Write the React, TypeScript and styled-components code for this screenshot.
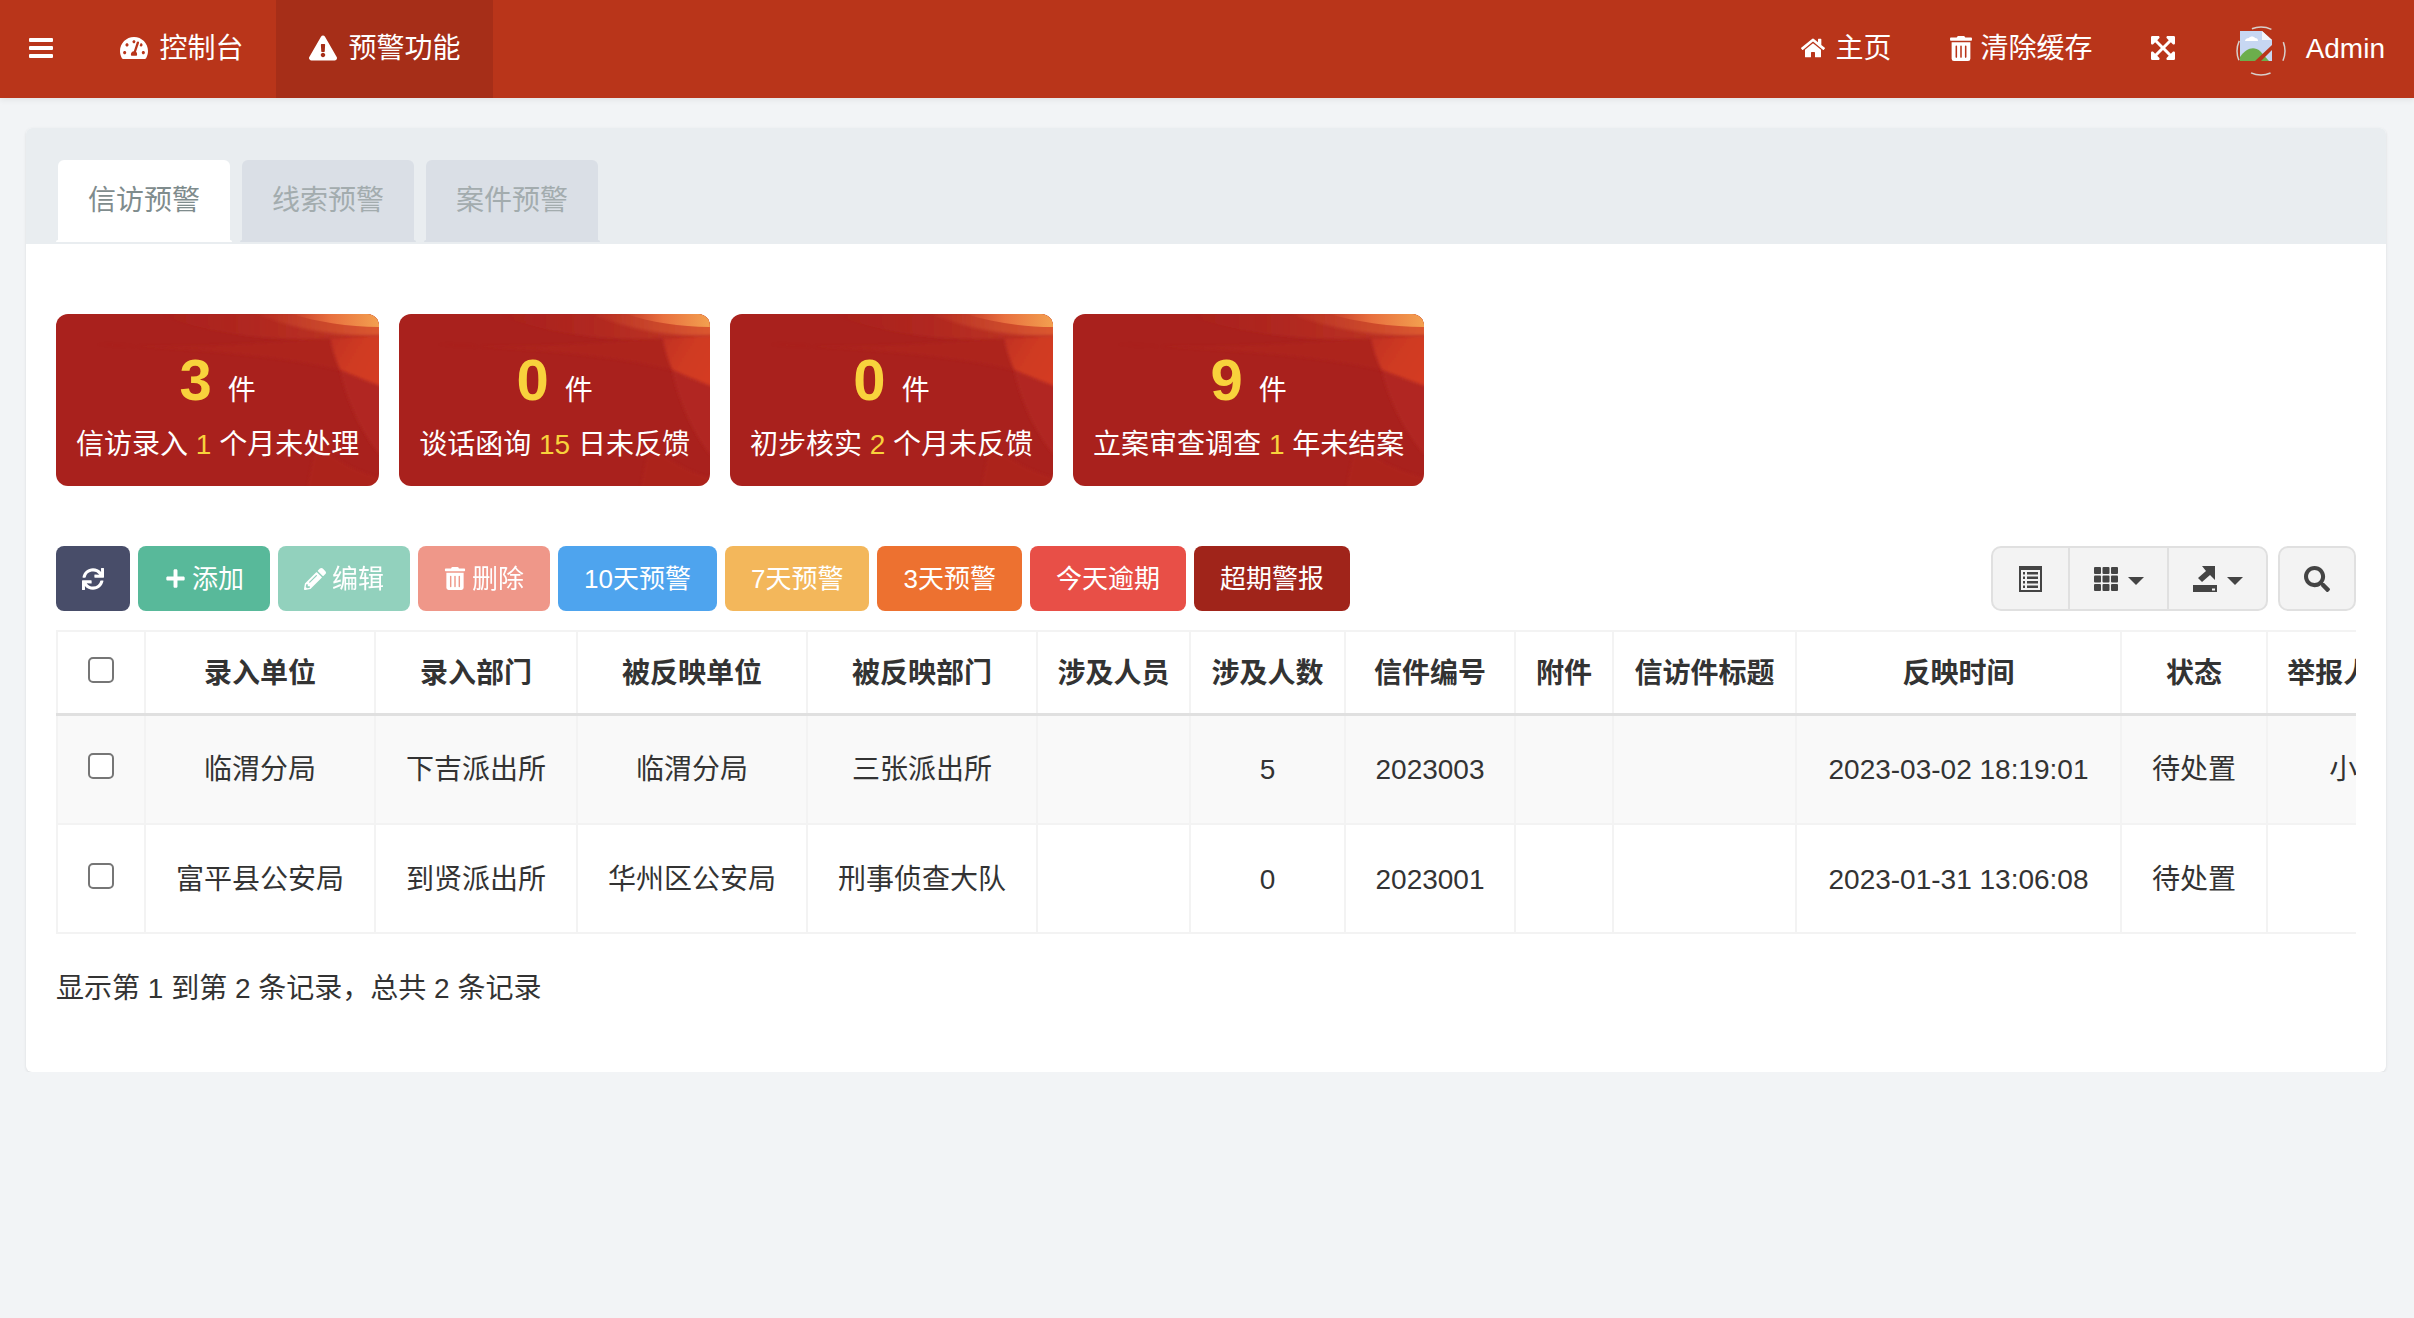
import React from 'react';
import styled, { createGlobalStyle } from 'styled-components';
import { FaTachometerAlt, FaExclamationTriangle, FaHome, FaTrashAlt, FaExpandArrowsAlt, FaSync, FaPlus, FaPencilAlt, FaSearch } from 'react-icons/fa';

const Global = createGlobalStyle`
  html, body { margin: 0; padding: 0; background: #f2f4f6; }
  body { font-family: "Liberation Sans", "Noto Sans CJK SC", sans-serif; font-size: 28px; color: #333; }
  * { box-sizing: border-box; }
`;

const Navbar = styled.header`
  height: 98px; background: #b9351a; color: #fff; display: flex; justify-content: space-between;
  box-shadow: 0 2px 6px rgba(0,0,0,.07);
`;
const NavGroup = styled.nav`display: flex; align-items: stretch;`;
const Toggle = styled.div`
  width: 87px; padding-left: 29px; display: flex; align-items: center;
  svg { display: block; margin-top: -2px; }
`;
const NavItem = styled.div<{ $active?: boolean; $pad?: number; $gap?: number }>`
  display: flex; align-items: center; padding: 0 ${p => p.$pad ?? 32.5}px; gap: ${p => p.$gap ?? 11}px;
  background: ${p => (p.$active ? '#a62e18' : 'transparent')};
  line-height: 40px; white-space: nowrap;
  svg { display: block; margin-top: -2px; }
`;
const AvatarWrap = styled.div`
  display: flex; align-items: center; gap: 20px; padding: 0 29px 0 32px;
  svg { display: block; margin-top: 4px; }
`;

const Panel = styled.main`
  margin: 30px 28px 0 26px; height: 944px; background: #fff; border-radius: 6px;
  box-shadow: 0 1px 3px rgba(0,0,0,.1);
`;
const PanelHead = styled.div`
  height: 116px; padding: 32px 32px 2px; background: #e9edf0; border-radius: 6px 6px 0 0;
  display: flex; gap: 12px;
`;
const Tab = styled.div<{ $active?: boolean }>`
  position: relative; width: 172px; height: 82px; border-radius: 6px 6px 0 0; text-align: center; line-height: 82px;
  background: ${p => (p.$active ? '#fff' : '#dadfe6')};
  color: ${p => (p.$active ? '#7f8c8d' : '#a3acae')};
  &::after {
    content: ''; position: absolute; left: -2px; right: -2px; bottom: 0; height: 2px;
    background: ${p => (p.$active ? '#fff' : '#dadfe6')}; border-radius: 2px 2px 0 0;
  }
`;
const PanelBody = styled.div`padding: 70px 30px 0;`;

const Cards = styled.section`display: flex; gap: 20px;`;
const Card = styled.div`
  position: relative; overflow: hidden; height: 172px; padding: 34px 20px 0; border-radius: 12px; background: #a9211d;
  color: #fff; text-align: center; white-space: nowrap;
`;
const CardBg = styled.svg`position: absolute; inset: 0; width: 100%; height: 100%; display: block;`;
const CountRow = styled.div`position: relative; line-height: 64px; height: 64px;`;
const Count = styled.b`font-size: 58px; color: #f8d23c; font-weight: 700; margin-right: 16px;`;
const Desc = styled.div`position: relative; margin-top: 13px; line-height: 40px;`;
const Hi = styled.span`color: #f8d23c;`;

const Toolbar = styled.div`display: flex; align-items: center; margin-top: 60px; height: 65px;`;
const Buttons = styled.div`display: flex; gap: 8px;`;
const Btn = styled.button<{ $bg: string; $dim?: boolean }>`
  height: 65px; padding: 0 26px; border: 0; border-radius: 8px; color: #fff;
  font-family: inherit; font-size: 26px;
  background: ${p => p.$bg}; opacity: ${p => (p.$dim ? 0.65 : 1)};
  display: flex; align-items: center; gap: 6px; white-space: nowrap; line-height: 40px;
`;
const IconBox = styled.span<{ $w?: number }>`
  width: ${p => p.$w ?? 22}px; display: flex; justify-content: center; align-items: center;
  svg { display: block; }
`;
const ToolRight = styled.div`margin-left: auto; display: flex; gap: 10px;`;
const BtnGroup = styled.div`
  display: flex; height: 65px; border: 2px solid #e0e0e0; border-radius: 10px; background: #f3f3f3; overflow: hidden;
`;
const GroupBtn = styled.div<{ $w: number }>`
  width: ${p => p.$w}px; display: flex; align-items: center; justify-content: center; gap: 10px; color: #444;
  & + & { border-left: 2px solid #e0e0e0; }
  svg { display: block; }
`;
const Caret = styled.i`
  display: block; width: 0; height: 0; margin-top: 4px; border-left: 8px solid transparent; border-right: 8px solid transparent; border-top: 8px solid #444;
`;
const SearchBtn = styled.div`
  width: 78px; height: 65px; border: 2px solid #e0e0e0; border-radius: 10px; background: #f3f3f3; color: #444;
  display: flex; align-items: center; justify-content: center;
`;

const TableWrap = styled.div`margin-top: 19px; overflow: hidden;`;
const Table = styled.table`
  width: 2390px; table-layout: fixed; border-collapse: collapse; text-align: center;
`;
const Th = styled.th`
  height: 83px; border: 2px solid #f3f3f3; border-bottom: 3px solid #e0e0e0; font-weight: 700; color: #333; padding: 3px 0 0 1px; white-space: nowrap; line-height: 40px;
`;
const Td = styled.td`
  border: 2px solid #f3f3f3; padding: 2px 0 0 1px; white-space: nowrap; line-height: 40px; color: #333;
`;
const Tr = styled.tr<{ $odd?: boolean; $h: number }>`
  height: ${p => p.$h}px; background: ${p => (p.$odd ? '#f9f9f9' : '#fff')};
`;
const Check = styled.input`
  appearance: none; display: block; width: 26px; height: 26px; margin: 0 auto 8px; border: 2px solid #767676; border-radius: 5px; background: #fff;
`;
const Footer = styled.div`margin-top: 35px; line-height: 40px; color: #333;`;

const CardArt = () => (
  <CardBg viewBox="0 0 323 172" preserveAspectRatio="none" aria-hidden>
    <defs>
      <filter id="soft" x="-10%" y="-10%" width="120%" height="120%"><feGaussianBlur stdDeviation="1.4" /></filter>
      <linearGradient id="sw1" x1="0" x2="1" y1="0" y2="0">
        <stop offset="0" stopColor="#b5281f" stopOpacity="0" />
        <stop offset="1" stopColor="#c23a26" />
      </linearGradient>
      <linearGradient id="sw2" x1="0" x2="1" y1="0" y2="0">
        <stop offset="0" stopColor="#c8412a" stopOpacity="0" />
        <stop offset="0.5" stopColor="#c8442a" />
        <stop offset="1" stopColor="#dd5a30" />
      </linearGradient>
      <linearGradient id="sw3" x1="0" x2="1" y1="0" y2="0">
        <stop offset="0" stopColor="#e2603c" stopOpacity="0" />
        <stop offset="0.45" stopColor="#e8703f" />
        <stop offset="1" stopColor="#f3a04f" />
      </linearGradient>
      <linearGradient id="sw4" x1="0" x2="1" y1="0" y2="0.6">
        <stop offset="0" stopColor="#c03024" />
        <stop offset="0.5" stopColor="#cf3a22" />
        <stop offset="1" stopColor="#d43b22" />
      </linearGradient>
    </defs>
    <path d="M40 30 C120 36 200 30 274 24 L284 56 C220 40 120 34 40 30Z" fill="#b0251f" opacity=".6" filter="url(#soft)" />
    <path d="M100 0 C160 22 230 28 274 24 L323 21 L323 0Z" fill="url(#sw1)" filter="url(#soft)" />
    <path d="M284 56 C290 85 305 118 323 140 L330 140 L330 71 C308 66 296 61 284 56Z" fill="#b12720" filter="url(#soft)" />
    <path d="M274 24 L330 21 L330 74 C308 66 296 61 284 56 C279 45 276 34 274 24Z" fill="url(#sw4)" filter="url(#soft)" />
    <path d="M190 -5 C235 16 280 23 330 21 L330 -5Z" fill="url(#sw2)" filter="url(#soft)" />
    <path d="M235 0 C262 8 292 13 323 13 L323 0Z" fill="url(#sw3)" />
    <path d="M260 130 C285 150 305 160 330 165 L330 180 L250 180Z" fill="#b0261f" opacity=".6" filter="url(#soft)" />
  </CardBg>
);

const cards = [
  { n: 3, a: '信访录入', h: '1', b: '个月未处理' },
  { n: 0, a: '谈话函询', h: '15', b: '日未反馈' },
  { n: 0, a: '初步核实', h: '2', b: '个月未反馈' },
  { n: 9, a: '立案审查调查', h: '1', b: '年未结案' },
];

const cols = [87.5, 230, 202, 230, 230, 153, 155, 170, 98, 183, 325, 146, 180.5];
const heads = ['录入单位', '录入部门', '被反映单位', '被反映部门', '涉及人员', '涉及人数', '信件编号', '附件', '信访件标题', '反映时间', '状态', '举报人姓名'];
const rows = [
  ['临渭分局', '下吉派出所', '临渭分局', '三张派出所', '', '5', '2023003', '', '', '2023-03-02 18:19:01', '待处置', '小明'],
  ['富平县公安局', '到贤派出所', '华州区公安局', '刑事侦查大队', '', '0', '2023001', '', '', '2023-01-31 13:06:08', '待处置', ''],
];

const Col = styled.col<{ $w: number }>`width: ${p => p.$w}px;`;

export default function App() {
  return (
    <>
      <Global />
      <Navbar>
        <NavGroup>
          <Toggle>
            <svg width="24" height="20" viewBox="0 0 24 20" fill="#fff">
              <rect y="0" width="24" height="4" rx="1" /><rect y="8" width="24" height="4" rx="1" /><rect y="16" width="24" height="4" rx="1" />
            </svg>
          </Toggle>
          <NavItem><IconBox $w={29}><FaTachometerAlt size={28} /></IconBox>控制台</NavItem>
          <NavItem $active><IconBox $w={29}><FaExclamationTriangle size={28} /></IconBox>预警功能</NavItem>
        </NavGroup>
        <NavGroup>
          <NavItem $pad={29}><IconBox $w={24}><FaHome size={26} /></IconBox>主页</NavItem>
          <NavItem $pad={29} $gap={9}><IconBox $w={22}><FaTrashAlt size={25} /></IconBox>清除缓存</NavItem>
          <NavItem $pad={29}><IconBox $w={24}><FaExpandArrowsAlt size={28} /></IconBox></NavItem>
          <AvatarWrap>
            <svg width="50" height="50" viewBox="0 0 50 50">
              <circle cx="25" cy="25" r="24" fill="none" stroke="#d8d0cc" strokeWidth="1.5" strokeDasharray="20 17.7" strokeDashoffset="10" />
              <path d="M4 5H26L36 14V35H4Z" fill="#c7d7f2" />
              <path d="M26 5L36 14H26Z" fill="#f4f6fb" />
              <path d="M9 15c0-2 2-3 4-3 1-2 5-2 6 0 2 0 3 1 3 3z" fill="#fff" />
              <path d="M4 35V31C10 22 18 20 24 25L33 35Z" fill="#6cae4c" />
              <path d="M19 35L36 19V24L25 35Z" fill="#b9351a" />
            </svg>
            Admin
          </AvatarWrap>
        </NavGroup>
      </Navbar>

      <Panel>
        <PanelHead>
          <Tab $active>信访预警</Tab>
          <Tab>线索预警</Tab>
          <Tab>案件预警</Tab>
        </PanelHead>
        <PanelBody>
          <Cards>
            {cards.map((c, i) => (
              <Card key={i}>
                <CardArt />
                <CountRow><Count>{c.n}</Count>件</CountRow>
                <Desc>{c.a} <Hi>{c.h}</Hi> {c.b}</Desc>
              </Card>
            ))}
          </Cards>

          <Toolbar>
            <Buttons>
              <Btn $bg="#484d69"><IconBox><FaSync size={22} /></IconBox></Btn>
              <Btn $bg="#58b99a"><IconBox><FaPlus size={21} /></IconBox>添加</Btn>
              <Btn $bg="#58b99a" $dim><IconBox><FaPencilAlt size={22} /></IconBox>编辑</Btn>
              <Btn $bg="#e7614b" $dim><IconBox><FaTrashAlt size={23} /></IconBox>删除</Btn>
              <Btn $bg="#4ea4ee">10天预警</Btn>
              <Btn $bg="#f3b75b">7天预警</Btn>
              <Btn $bg="#ed7130">3天预警</Btn>
              <Btn $bg="#e84f47">今天逾期</Btn>
              <Btn $bg="#a0241a">超期警报</Btn>
            </Buttons>
            <ToolRight>
              <BtnGroup>
                <GroupBtn $w={75}>
                  <svg width="23" height="26" viewBox="0 0 23 26">
                    <rect width="23" height="26" fill="#444" />
                    <rect x="2" y="4" width="19" height="20" fill="#f3f3f3" />
                    <g fill="#444">
                      <rect x="4" y="6" width="2" height="2.5" /><rect x="8" y="6" width="11" height="2.5" />
                      <rect x="4" y="10.5" width="2" height="2.5" /><rect x="8" y="10.5" width="11" height="2.5" />
                      <rect x="4" y="15" width="2" height="2.5" /><rect x="8" y="15" width="11" height="2.5" />
                      <rect x="4" y="19.5" width="2" height="2.5" /><rect x="8" y="19.5" width="11" height="2.5" />
                    </g>
                  </svg>
                </GroupBtn>
                <GroupBtn $w={99}>
                  <svg width="24" height="24" viewBox="0 0 24 24" fill="#444">
                    {[0, 8.5, 17].flatMap(y => [0, 8.5, 17].map(x => <rect key={`${x}-${y}`} x={x} y={y} width="7" height="7" rx="1" />))}
                  </svg>
                  <Caret />
                </GroupBtn>
                <GroupBtn $w={99}>
                  <svg width="24" height="26" viewBox="0 0 24 26" fill="#444">
                    <path d="M22 0H9L13 5 5 12l4 4 8-7 5 5Z" />
                    <path d="M0 26V19H24V26Z" />
                    <rect x="19" y="22.5" width="3" height="2" fill="#f3f3f3" />
                  </svg>
                  <Caret />
                </GroupBtn>
              </BtnGroup>
              <SearchBtn><FaSearch size={26} /></SearchBtn>
            </ToolRight>
          </Toolbar>

          <TableWrap>
            <Table>
              <colgroup>{cols.map((w, i) => <Col key={i} $w={w} />)}</colgroup>
              <thead>
                <tr>
                  <Th><Check type="checkbox" aria-label="全选" /></Th>
                  {heads.map(h => <Th key={h}>{h}</Th>)}
                </tr>
              </thead>
              <tbody>
                {rows.map((r, i) => (
                  <Tr key={i} $odd={i === 0} $h={i === 0 ? 110 : 109}>
                    <Td><Check type="checkbox" aria-label="选择" /></Td>
                    {r.map((c, j) => <Td key={j}>{c}</Td>)}
                  </Tr>
                ))}
              </tbody>
            </Table>
          </TableWrap>
          <Footer>显示第 1 到第 2 条记录，总共 2 条记录</Footer>
        </PanelBody>
      </Panel>
    </>
  );
}
